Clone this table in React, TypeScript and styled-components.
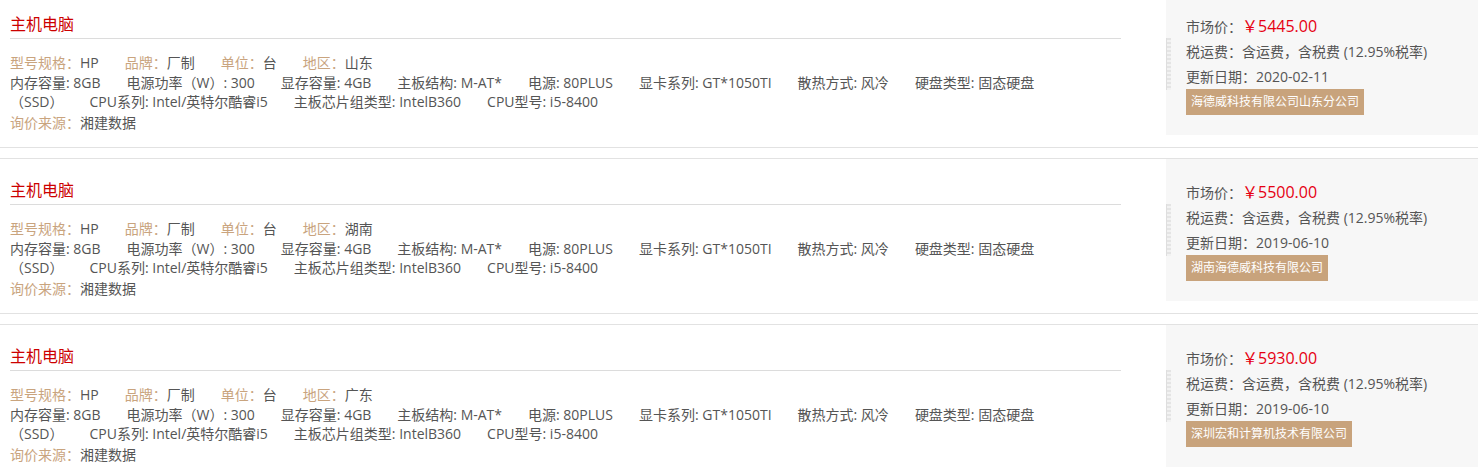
import styled, { createGlobalStyle } from 'styled-components'

interface Offer {
  region: string
  price: string
  date: string
  company: string
}

const offers: Offer[] = [
  { region: '山东', price: '￥5445.00', date: '2020-02-11', company: '海德威科技有限公司山东分公司' },
  { region: '湖南', price: '￥5500.00', date: '2019-06-10', company: '湖南海德威科技有限公司' },
  { region: '广东', price: '￥5930.00', date: '2019-06-10', company: '深圳宏和计算机技术有限公司' },
]

const specs = [
  '内存容量: 8GB',
  '电源功率（W）: 300',
  '显存容量: 4GB',
  '主板结构: M-AT*',
  '电源: 80PLUS',
  '显卡系列: GT*1050TI',
  '散热方式: 风冷',
  '硬盘类型: 固态硬盘（SSD）',
  'CPU系列: Intel/英特尔酷睿i5',
  '主板芯片组类型: IntelB360',
  'CPU型号: i5-8400',
]

const GlobalStyle = createGlobalStyle`
  body {
    margin: 0;
    background: #fff;
    font-family: "Open Sans", "Noto Sans CJK SC", sans-serif;
    font-size: 14px;
    color: #555;
  }
`

const App = () => {
  return (
    <>
      <GlobalStyle />
      <List>
        {offers.map((offer, i) => (
          <Item key={i}>
            <Info>
              <Title>主机电脑</Title>
              <Row>
                <Field>
                  <Label>型号规格：</Label>HP
                </Field>
                <Field>
                  <Label>品牌：</Label>厂制
                </Field>
                <Field>
                  <Label>单位：</Label>台
                </Field>
                <Field>
                  <Label>地区：</Label>
                  {offer.region}
                </Field>
              </Row>
              <Specs>
                {specs.map((s) => (
                  <Field key={s}>{s}</Field>
                ))}
              </Specs>
              <Source>
                <Label>询价来源：</Label>湘建数据
              </Source>
            </Info>
            <PricePanel>
              <PriceLine>
                市场价：<Price>{offer.price}</Price>
              </PriceLine>
              <PriceLine>税运费：含运费，含税费 (12.95%税率)</PriceLine>
              <PriceLine>更新日期：{offer.date}</PriceLine>
              <Company>{offer.company}</Company>
            </PricePanel>
          </Item>
        ))}
      </List>
    </>
  )
}

export default App

const List = styled.div`
  margin-top: -8px;
`

const Item = styled.div`
  display: flex;
  align-items: flex-start;
  border-top: 1px solid #e2e2e2;
  border-bottom: 1px solid #e2e2e2;
  padding-bottom: 12px;
  margin-bottom: 10px;
`

const Info = styled.div`
  width: 1121px;
  padding: 19px 0 0 10px;
  box-sizing: border-box;
  margin-right: 45px;
  flex-shrink: 0;
`

const Title = styled.div`
  font-size: 16px;
  line-height: 24px;
  color: #cc0000;
  padding-bottom: 2px;
  border-bottom: 1px solid #dcdcdc;
`

const Row = styled.div`
  margin-top: 14px;
  line-height: 20px;
`

const Field = styled.span`
  margin-right: 26px;
`

const Label = styled.span`
  color: #c9a47e;
`

const Specs = styled.div`
  width: 1050px;
  line-height: 19px;
`

const Source = styled.div`
  margin-top: 2px;
  line-height: 20px;
`

const PricePanel = styled.div`
  position: relative;
  flex: 1;
  height: 142px;
  box-sizing: border-box;
  padding: 21px 0 0 20px;
  background: #f7f7f7;

  &::before {
    content: '';
    position: absolute;
    left: 0;
    top: 45px;
    width: 4px;
    height: 52px;
    background: repeating-linear-gradient(to bottom, #e4e4e4 0 2px, #f2f2f2 2px 4px);
    border-left: 1px solid #dedede;
  }
`

const PriceLine = styled.div`
  line-height: 25px;
  color: #555;
`

const Price = styled.span`
  font-size: 16px;
  color: #e60012;
`

const Company = styled.span`
  display: inline-block;
  height: 26px;
  line-height: 26px;
  padding: 0 5px;
  font-size: 12px;
  color: #fff;
  background: #c8a37c;
`
